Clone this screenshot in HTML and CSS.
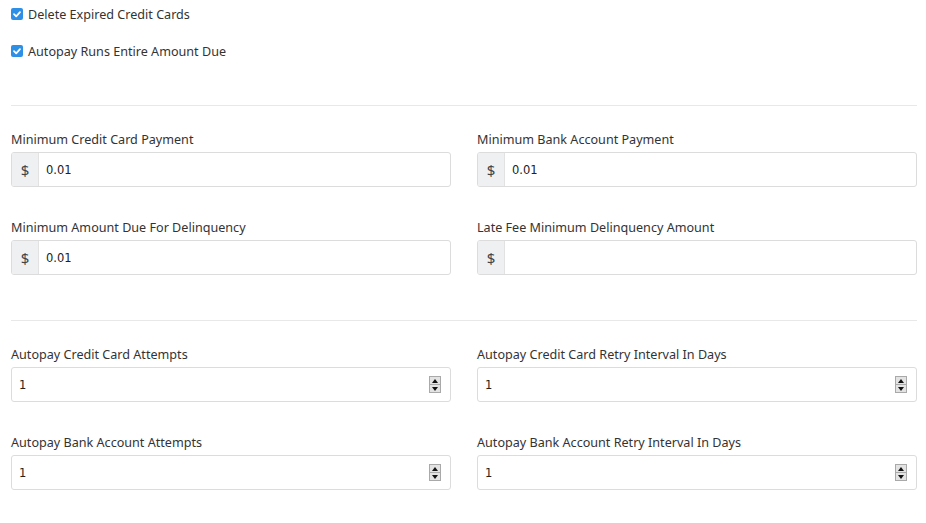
FILE: index.html
```html
<!DOCTYPE html>
<html lang="en">
<head>
    <meta charset="UTF-8">
    <meta name="viewport" content="width=device-width, initial-scale=1.0">
    <title>Payment Settings</title>
    <link rel="stylesheet" href="styles.css">
</head>
<body>

<div class="page">
    <label class="check">
        <span class="check-box"><svg viewBox="0 0 12 12" width="12" height="12"><path d="M3 6.2 L5.2 8.3 L9 4.2" fill="none" stroke="#fff" stroke-width="1.8" stroke-linecap="round" stroke-linejoin="round"/></svg></span>
        Delete Expired Credit Cards
    </label>
    <label class="check">
        <span class="check-box"><svg viewBox="0 0 12 12" width="12" height="12"><path d="M3 6.2 L5.2 8.3 L9 4.2" fill="none" stroke="#fff" stroke-width="1.8" stroke-linecap="round" stroke-linejoin="round"/></svg></span>
        Autopay Runs Entire Amount Due
    </label>

    <hr class="divider">

    <div class="fields">
        <div class="field">
            <label>Minimum Credit Card Payment</label>
            <div class="input-group">
                <span class="addon">$</span>
                <input type="text" value="0.01">
            </div>
        </div>
        <div class="field">
            <label>Minimum Bank Account Payment</label>
            <div class="input-group">
                <span class="addon">$</span>
                <input type="text" value="0.01">
            </div>
        </div>
        <div class="field">
            <label>Minimum Amount Due For Delinquency</label>
            <div class="input-group">
                <span class="addon">$</span>
                <input type="text" value="0.01">
            </div>
        </div>
        <div class="field">
            <label>Late Fee Minimum Delinquency Amount</label>
            <div class="input-group">
                <span class="addon">$</span>
                <input type="text" value="">
            </div>
        </div>
    </div>

    <hr class="divider">

    <div class="fields">
        <div class="field">
            <label>Autopay Credit Card Attempts</label>
            <div class="number-box">
                <input type="text" value="1">
                <span class="spinner"><span class="up"></span><span class="down"></span></span>
            </div>
        </div>
        <div class="field">
            <label>Autopay Credit Card Retry Interval In Days</label>
            <div class="number-box">
                <input type="text" value="1">
                <span class="spinner"><span class="up"></span><span class="down"></span></span>
            </div>
        </div>
        <div class="field">
            <label>Autopay Bank Account Attempts</label>
            <div class="number-box">
                <input type="text" value="1">
                <span class="spinner"><span class="up"></span><span class="down"></span></span>
            </div>
        </div>
        <div class="field">
            <label>Autopay Bank Account Retry Interval In Days</label>
            <div class="number-box">
                <input type="text" value="1">
                <span class="spinner"><span class="up"></span><span class="down"></span></span>
            </div>
        </div>
    </div>
</div>

</body>
</html>
```

FILE: styles.css
```css
body {
    margin: 0;
    padding: 0;
    background-color: #fff;
    font-family: "Noto Sans", sans-serif;
    font-size: 12.6px;
    color: #333;
}

.page {
    padding: 5px 9px 0 11px;
}

.check {
    display: flex;
    align-items: center;
    gap: 5px;
    height: 18px;
    margin-bottom: 19px;
}

.check-box {
    display: flex;
    align-items: center;
    justify-content: center;
    width: 12px;
    height: 12px;
    border-radius: 2px;
    background: #2d8fe6;
}

.divider {
    border: none;
    border-top: 1px solid #e8e8e8;
    margin: 45px 0 24px;
}

.fields {
    display: grid;
    grid-template-columns: 1fr 1fr;
    column-gap: 26px;
    row-gap: 31px;
}

.field label {
    display: block;
    line-height: 18px;
    padding-top: 1px;
    margin-bottom: 3px;
}

.input-group,
.number-box {
    display: flex;
    align-items: center;
    height: 35px;
    box-sizing: border-box;
    border: 1px solid #dcdcdc;
    border-radius: 3px;
    overflow: hidden;
}

.addon {
    width: 26px;
    height: 100%;
    display: flex;
    align-items: center;
    justify-content: center;
    background: #eef0f2;
    font-size: 15px;
    color: #444;
    border-right: 1px solid #e2e2e2;
}

.input-group input,
.number-box input {
    flex: 1;
    border: none;
    outline: none;
    height: 100%;
    padding: 0 7px;
    font-family: "DejaVu Sans", sans-serif;
    font-size: 11.5px;
    color: #222;
    background: transparent;
}

.spinner {
    display: flex;
    flex-direction: column;
    width: 12px;
    height: 17px;
    margin-right: 9px;
    border: 1px solid #a9a9a9;
    box-sizing: border-box;
    background: #e3e3e3;
}

.spinner span {
    flex: 1;
    position: relative;
}

.spinner .up {
    border-bottom: 1px solid #a9a9a9;
}

.spinner .up::after,
.spinner .down::after {
    content: "";
    position: absolute;
    left: 2px;
    top: 2px;
    border-left: 3px solid transparent;
    border-right: 3px solid transparent;
}

.spinner .up::after {
    border-bottom: 4px solid #111;
}

.spinner .down::after {
    border-top: 4px solid #111;
}
```
